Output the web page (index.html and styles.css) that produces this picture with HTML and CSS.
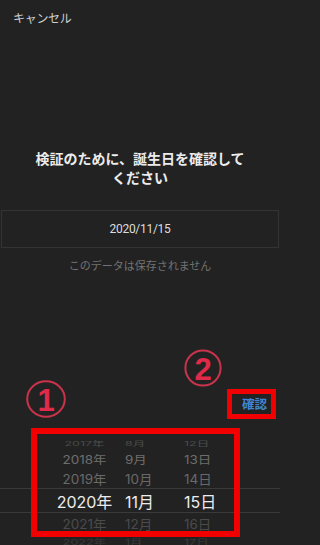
FILE: index.html
```html
<!DOCTYPE html>
<html lang="ja">
<head>
<meta charset="utf-8">
<title>誕生日の確認</title>
<link rel="stylesheet" href="styles.css">
</head>
<body>
<div class="screen">
  <div class="header">キャンセル</div>
  <h1 class="title">検証のために、誕生日を確認して<br>ください</h1>
  <div class="date-box">2020/11/15</div>
  <p class="note">このデータは保存されません</p>
  <div class="confirm-row"><span class="confirm">確認</span></div>
  <div class="picker">
    <div class="prow r0"><span class="y">2017年</span><span>8月</span><span>12日</span></div>
    <div class="prow r1"><span class="y">2018年</span><span>9月</span><span>13日</span></div>
    <div class="prow r2"><span class="y">2019年</span><span>10月</span><span>14日</span></div>
    <div class="prow sel"><span class="y">2020年</span><span>11月</span><span>15日</span></div>
    <div class="prow r4"><span class="y">2021年</span><span>12月</span><span>16日</span></div>
    <div class="prow r5"><span class="y">2022年</span><span>1月</span><span>17日</span></div>
  </div>

  <svg class="mark mark-1" viewBox="0 0 40 38" width="40" height="38">
    <ellipse cx="20" cy="19" rx="18.8" ry="17.8" fill="none" stroke="#c9334b" stroke-width="2"/>
    <text x="20" y="30.5" text-anchor="middle" class="mark-num">1</text>
  </svg>
  <svg class="mark mark-2" viewBox="0 0 38 38" width="38" height="38">
    <circle cx="19" cy="19" r="17.6" fill="none" stroke="#c9334b" stroke-width="2"/>
    <text x="19" y="30.5" text-anchor="middle" class="mark-num">2</text>
  </svg>
  <div class="hl hl-confirm"></div>
  <div class="hl hl-picker"></div>
</div>
</body>
</html>
```
FILE: styles.css
```css
html, body {
  margin: 0;
  padding: 0;
  background: #222222;
}
.screen {
  position: relative;
  width: 280px;
  height: 545px;
  overflow: hidden;
  background: #222222;
  font-family: "Noto Sans CJK JP", sans-serif;
  color: #e6e6e6;
}
.header {
  padding: 11px 0 0 13px;
  font-size: 12px;
  line-height: 14px;
  color: #cfcfcf;
  letter-spacing: -0.3px;
}
.title {
  margin: 124px 0 0;
  font-size: 14px;
  line-height: 19px;
  font-weight: 700;
  text-align: center;
  color: #ececec;
}
.date-box {
  margin: 23px 1px 0;
  height: 36px;
  border: 1px solid #343434;
  display: flex;
  align-items: center;
  justify-content: center;
  font-family: Roboto, "Noto Sans CJK JP", sans-serif;
  font-size: 12px;
  letter-spacing: -0.3px;
  color: #dedede;
}
.note {
  margin: 10px 0 0;
  font-size: 11px;
  line-height: 14px;
  text-align: center;
  color: #727272;
}
.confirm-row {
  margin-top: 124px;
  display: flex;
  justify-content: flex-end;
  padding-right: 13px;
  line-height: 16px;
}
.confirm {
  font-size: 12.5px;
  font-weight: 700;
  color: #3f87d6;
}
.picker {
  margin-top: 23px;
  font-family: Inter, "Noto Sans CJK JP", sans-serif;
}
.prow {
  display: grid;
  grid-template-columns: 69px 53px 1fr;
  column-gap: 6px;
  padding-left: 50px;
  align-items: center;
  box-sizing: border-box;
  white-space: nowrap;
}
.prow .y {
  text-align: center;
}
.r0 {
  height: 14px;
  font-size: 12.5px;
  color: #4c4c4c;
  transform: scaleY(0.5);
}
.r1 {
  height: 19px;
  font-size: 13.5px;
  color: #6e6e6e;
  transform: scaleY(0.85);
}
.r2 {
  height: 20px;
  font-size: 13.5px;
  color: #696969;
  transform: scaleY(0.95);
}
.sel {
  height: 25px;
  font-size: 16px;
  color: #ececec;
  border-top: 1px solid #3a3a3a;
  border-bottom: 1px solid #3a3a3a;
}
.r4 {
  height: 20px;
  font-size: 13.5px;
  color: #4b4b4b;
  transform: scaleY(0.95);
}
.r5 {
  height: 16px;
  font-size: 12.5px;
  color: #3a3a3a;
  transform: scaleY(0.6);
}

/* annotation overlays */
.mark {
  position: absolute;
  display: block;
}
.mark-1 {
  left: 26px;
  top: 380px;
}
.mark-2 {
  left: 184px;
  top: 349px;
}
.mark-num {
  font-family: "Liberation Sans", Arial, sans-serif;
  font-weight: 700;
  font-size: 31px;
  fill: #e02a4a;
}
.hl {
  position: absolute;
  box-sizing: border-box;
  border-style: solid;
  border-color: #f20000;
}
.hl-confirm {
  left: 227px;
  top: 389px;
  width: 49px;
  height: 30px;
  border-width: 5px;
}
.hl-picker {
  left: 31px;
  top: 428px;
  width: 209px;
  height: 109px;
  border-width: 6px;
}
```
